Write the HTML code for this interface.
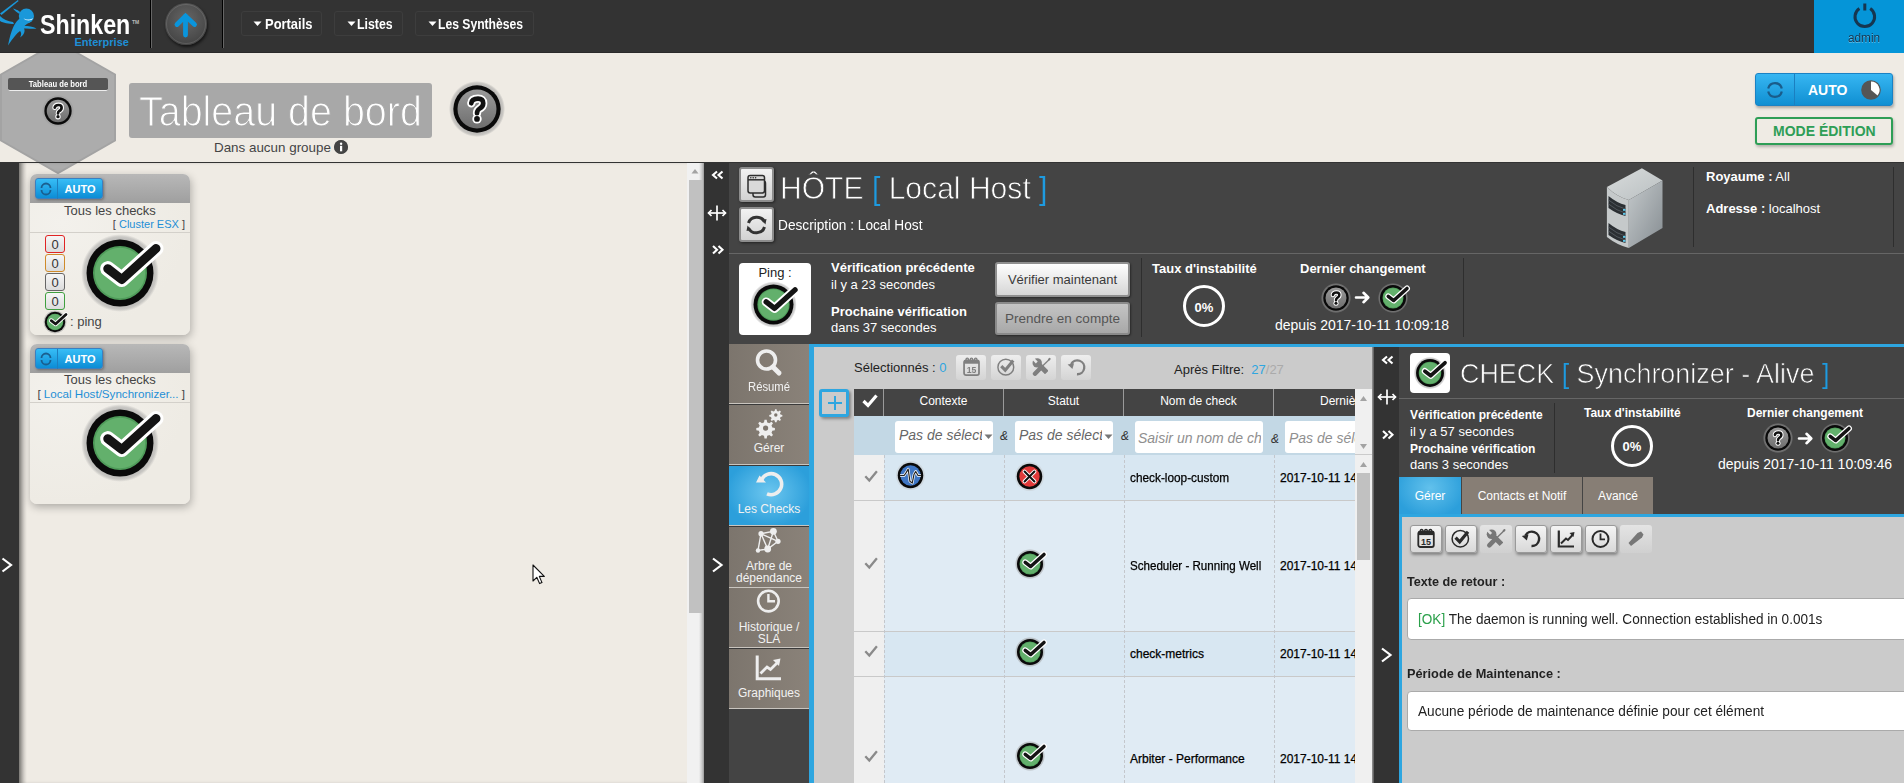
<!DOCTYPE html>
<html><head><meta charset="utf-8">
<style>
*{box-sizing:border-box;}
html,body{margin:0;padding:0;}
body{width:1904px;height:783px;overflow:hidden;position:relative;background:#efebe4;font-family:"Liberation Sans",sans-serif;color:#333;}
.a{position:absolute;}
.t{position:absolute;white-space:nowrap;line-height:1;}
svg.i{position:absolute;overflow:visible;}
.wl{color:#fff;}
.b{font-weight:bold;}
</style></head><body>
<svg width="0" height="0" style="position:absolute">
<defs>
<radialGradient id="halo" cx="50%" cy="50%" r="50%"><stop offset="0.85" stop-color="#9a9a9a" stop-opacity="0.6"/><stop offset="0.93" stop-color="#9a9a9a" stop-opacity="0.45"/><stop offset="1" stop-color="#9a9a9a" stop-opacity="0"/></radialGradient>
<linearGradient id="gq" x1="0" y1="0" x2="0" y2="1"><stop offset="0" stop-color="#9a9a9a"/><stop offset="1" stop-color="#6e6e6e"/></linearGradient>
<symbol id="ok" viewBox="-50 -50 100 100" style="overflow:visible">
<circle r="54" fill="url(#halo)"/>
<circle r="46.5" fill="#0a0a0a"/>
<circle r="37.5" fill="#4f9c5a"/>
<circle r="35" fill="#63b06c"/>
<path d="M-17 -6 L2.5 9 L50 -34" fill="none" stroke="#fff" stroke-width="21" stroke-linecap="round" stroke-linejoin="round"/>
<path d="M-17 -6 L2.5 9 L50 -34" fill="none" stroke="#141414" stroke-width="12.5" stroke-linecap="round" stroke-linejoin="round"/>
</symbol>
<symbol id="q" viewBox="-50 -50 100 100" style="overflow:visible">
<circle r="54" fill="url(#halo)"/>
<circle r="45.5" fill="#0a0a0a"/>
<circle r="37.5" fill="url(#gq)"/>
<path d="M-11 -11 Q-10 -20 2 -20 Q12 -20 12 -11 Q12 -4 4 0 Q0 3 0 8" fill="none" stroke="#fff" stroke-width="16" stroke-linecap="round" stroke-linejoin="round"/>
<circle cx="0" cy="19" r="9" fill="#fff"/>
<path d="M-11 -11 Q-10 -20 2 -20 Q12 -20 12 -11 Q12 -4 4 0 Q0 3 0 8" fill="none" stroke="#111" stroke-width="9" stroke-linecap="round" stroke-linejoin="round"/>
<circle cx="0" cy="19" r="5.5" fill="#111"/>
</symbol>
<symbol id="ic-cal" viewBox="0 0 31 27">
 <rect x="8.3" y="6.5" width="15.5" height="15.5" rx="2" fill="none" stroke="currentColor" stroke-width="1.8"/>
 <rect x="8.3" y="6.5" width="15.5" height="3.6" fill="currentColor"/>
 <g fill="none" stroke="currentColor" stroke-width="1.3"><circle cx="11.6" cy="5.6" r="1.3"/><circle cx="16" cy="5.6" r="1.3"/><circle cx="20.4" cy="5.6" r="1.3"/></g>
 <text x="16" y="19.8" text-anchor="middle" font-family="Liberation Sans" font-weight="bold" font-size="9" fill="currentColor">15</text>
</symbol>
<symbol id="ic-chk" viewBox="0 0 31 27">
 <circle cx="15.3" cy="13.7" r="8.2" fill="none" stroke="currentColor" stroke-width="1.5"/>
 <path d="M10.6 12.6 L14.7 16.8 L23 6.8" fill="none" stroke="currentColor" stroke-width="3.2" stroke-linejoin="miter"/>
</symbol>
<symbol id="ic-tools" viewBox="0 0 30 26">
 <mask id="wmask"><rect x="0" y="0" width="30" height="26" fill="#fff"/><path d="M6.5 4.2 L10.8 8.5" stroke="#000" stroke-width="2.6"/></mask>
 <g mask="url(#wmask)">
  <circle cx="11.2" cy="8.9" r="4.7" fill="currentColor"/>
  <path d="M11.8 9.6 L20.8 18.6" stroke="currentColor" stroke-width="5"/>
 </g>
 <path d="M23 5.7 L14.5 14" stroke="currentColor" stroke-width="1.3"/>
 <ellipse cx="23.3" cy="5.3" rx="1.1" ry="1.6" transform="rotate(45 23.3 5.3)" fill="currentColor"/>
 <path d="M15.3 13.2 L9 19.7" stroke="currentColor" stroke-width="4.4" stroke-linecap="round"/>
</symbol>
<symbol id="ic-undo" viewBox="0 0 31 27">
 <path d="M10.5 10.5 A7.2 7.2 0 1 1 16.5 21" fill="none" stroke="currentColor" stroke-width="2.4"/>
 <path d="M6.8 11 L11.8 15.5 L13.5 9.5 Z" fill="currentColor"/>
</symbol>
<symbol id="ic-chart" viewBox="0 0 31 27">
 <path d="M8.8 5.5 L8.8 21.5 L24 21.5" fill="none" stroke="currentColor" stroke-width="2.2"/>
 <path d="M11 18.5 L16 13.5 L18 15 L22.5 10" fill="none" stroke="currentColor" stroke-width="2"/>
 <path d="M19.5 8 L24.5 7 L23.5 12 Z" fill="currentColor"/>
</symbol>
<symbol id="ic-clock" viewBox="0 0 31 27">
 <circle cx="15.5" cy="14" r="8" fill="none" stroke="currentColor" stroke-width="2"/>
 <path d="M15.5 8.5 L15.5 14.3 L20 14.3" fill="none" stroke="currentColor" stroke-width="1.8"/>
</symbol>
<symbol id="ic-tag" viewBox="0 0 31 27">
 <path d="M11 21 L8.5 18 L17.5 8 L21 6.5 L23.5 9.5 L22 12.5 Z" fill="currentColor"/>
</symbol>
</defs>
</svg>

<!-- HEADER (beige) -->
<div id="hdr" class="a" style="left:0;top:0;width:1904px;height:163px;">
<svg class="i" style="left:0;top:41px" width="116" height="133" viewBox="0 0 116 133"><polygon points="58,1 115,33.5 115,99.5 58,132 1,99.5 1,33.5" fill="#acacac" stroke="#a3a3a3" stroke-width="2"/></svg>
<div class="a" style="left:8px;top:78px;width:100px;height:13px;background:#555;border-bottom:1px solid #eee;border-radius:2px;"></div>
<div class="t" style="left:8px;top:80px;width:100px;text-align:center;font-size:9px;font-weight:bold;color:#fff;transform:scaleX(0.85);transform-origin:50% 0;">Tableau de bord</div>
<svg class="i" style="left:43px;top:96px" width="30" height="30"><use href="#q"/></svg>
<div class="a" style="left:129px;top:83px;width:303px;height:55px;background:#a8a8a8;border-radius:3px;"></div>
<div id="ttl" class="t" style="left:139px;top:90px;font-size:43px;color:#fff;transform:scaleX(0.917);transform-origin:0 0;-webkit-text-stroke:1.1px #a8a8a8;">Tableau de bord</div>
<svg class="i" style="left:451px;top:83px" width="52" height="52"><use href="#q"/></svg>
<div id="dag" class="t" style="left:214px;top:140.5px;font-size:13.4px;color:#444;">Dans aucun groupe</div>
<div class="a" style="left:334px;top:140px;width:14px;height:14px;border-radius:50%;background:#444;"></div>
<div class="a" style="left:1755px;top:73px;width:138px;height:33px;border-radius:3px;background:linear-gradient(#37b6f2,#0f8fd2);border:1px solid #1a82c4;box-shadow:1px 2px 3px rgba(0,0,0,0.3);"></div>
<div class="t" style="left:1808px;top:83px;font-size:14px;font-weight:bold;color:#fff;">AUTO</div>
<div class="a" style="left:1755px;top:117px;width:138px;height:28px;border-radius:3px;border:2px solid #2e9e56;box-shadow:1px 2px 3px rgba(0,0,0,0.25);"></div>
<div class="t" style="left:1773px;top:124px;font-size:14px;font-weight:bold;color:#2e9e56;">MODE ÉDITION</div>
<div class="a" style="left:0;top:162px;width:1904px;height:1px;background:#333;"></div>
</div>

<!-- TOP BAR -->
<div id="top" class="a" style="left:0;top:0;width:1904px;height:53px;background:#333;border-bottom:1px solid #2a2a2a;">
<div class="t" style="left:40px;top:11.3px;font-size:28px;font-weight:bold;color:#fff;letter-spacing:0;transform:scaleX(0.829);transform-origin:0 0;">Shinken</div>
<div class="t" style="left:74.5px;top:37.4px;font-size:11px;color:#1e8fd6;font-weight:bold;">Enterprise</div>
<div class="a" style="left:150px;top:0;width:1px;height:48px;background:#000;"></div>
<div class="a" style="left:151px;top:0;width:1px;height:48px;background:#666;"></div>
<div class="a" style="left:165px;top:2.5px;width:42px;height:42px;border-radius:50%;background:radial-gradient(circle at 50% 40%,#666,#3a3a3a);box-shadow:1px 2px 3px rgba(0,0,0,0.6);"></div>
<div class="a" style="left:222px;top:0;width:1px;height:48px;background:#000;"></div>
<div class="a" style="left:223px;top:0;width:1px;height:48px;background:#666;"></div>
<div class="a" style="left:241px;top:11px;width:81px;height:25px;border:1px solid #3d3d3d;border-radius:3px;"></div>
<div class="t" style="left:264.5px;top:17px;font-size:14px;font-weight:bold;color:#fff;transform:scaleX(0.924);transform-origin:0 0;">Portails</div>
<div class="a" style="left:334px;top:11px;width:69px;height:25px;border:1px solid #3d3d3d;border-radius:3px;"></div>
<div class="t" style="left:357px;top:17px;font-size:14px;font-weight:bold;color:#fff;transform:scaleX(0.88);transform-origin:0 0;">Listes</div>
<div class="a" style="left:415px;top:11px;width:119px;height:25px;border:1px solid #3d3d3d;border-radius:3px;"></div>
<div class="t" style="left:438px;top:17px;font-size:14px;font-weight:bold;color:#fff;transform:scaleX(0.867);transform-origin:0 0;">Les Synthèses</div>
<div class="a" style="left:1814px;top:0;width:90px;height:53px;background:#0595d8;"></div>
<div class="t" style="left:1848px;top:31.5px;font-size:12px;color:#173752;text-shadow:0 1px 0 rgba(255,255,255,0.35);transform:scaleX(0.98);transform-origin:0 0;">admin</div>
</div>

<!-- LEFT -->
<div class="a" style="left:0;top:163px;width:19px;height:620px;background:#333;"></div>
<div class="a" style="left:19px;top:163px;width:668px;height:620px;box-shadow:inset 4px 0 4px -2px rgba(0,0,0,0.35);"></div>
<div class="a" style="left:687px;top:163px;width:17px;height:620px;background:linear-gradient(90deg,#f1f1f1 0,#f1f1f1 12px,#c9c9c9 15px,#9a9a9a 17px);"></div>
<div class="a" style="left:689px;top:180px;width:13px;height:433px;background:#c1c1c1;"></div>
<div class="a" style="left:704px;top:163px;width:25px;height:620px;background:#333;"></div>


<!-- WIDGETS -->
<div class="a" style="left:30px;top:174px;width:160px;height:161px;border-radius:7px;background:radial-gradient(ellipse at 20% 30%,#f3f1ec,#eeebe4 70%);box-shadow:1px 3px 8px rgba(0,0,0,0.28);overflow:hidden;">
 <div class="a" style="left:0;top:0;width:160px;height:29px;background:linear-gradient(#b8b8b8,#9f9f9f);"></div>
 <div class="a" style="left:0;top:58px;width:160px;height:1px;background:#d3d0ca;"></div>
</div>
<div class="a" style="left:35px;top:178px;width:68px;height:21px;border-radius:3px;background:linear-gradient(#37bdf6,#0c8dd5);border:1px solid #3b7fc0;box-shadow:1px 1px 3px rgba(0,0,0,0.35);"></div>
<div class="a" style="left:57px;top:179px;width:1px;height:20px;background:#1f7fbf;"></div>
<div class="t" style="left:64.5px;top:184px;font-size:11px;font-weight:bold;color:#fff;">AUTO</div>
<svg class="i" style="left:40px;top:183px" width="12" height="12" viewBox="0 0 12 12"><g fill="none" stroke="#1a5f8f" stroke-width="1.8"><path d="M1.5 5 A4.5 4.5 0 0 1 10.5 5"/><path d="M10.5 7 A4.5 4.5 0 0 1 1.5 7"/></g></svg>
<div class="t" style="left:30px;top:203.5px;width:160px;text-align:center;font-size:13px;color:#444;">Tous les checks</div>
<div class="t" style="left:30px;top:218.5px;width:155px;text-align:right;font-size:11px;color:#444;">[ <span style="color:#1e8fd6">Cluster ESX</span> ]</div>
<div class="a" style="left:45px;top:235px;width:20px;height:18px;border-radius:3px;border:1.5px solid #e02424;background:linear-gradient(#f6f6f6,#dcdcdc);"></div>
<div class="a" style="left:45px;top:254px;width:20px;height:18px;border-radius:3px;border:1.5px solid #cf8a2a;background:linear-gradient(#f6f6f6,#dcdcdc);"></div>
<div class="a" style="left:45px;top:273px;width:20px;height:18px;border-radius:3px;border:1.5px solid #666;background:linear-gradient(#f6f6f6,#dcdcdc);"></div>
<div class="a" style="left:45px;top:292px;width:20px;height:18px;border-radius:3px;border:1.5px solid #3f9f3f;background:linear-gradient(#f6f6f6,#dcdcdc);"></div>
<div class="t" style="left:45px;top:238px;width:20px;text-align:center;font-size:13px;color:#333;">0</div>
<div class="t" style="left:45px;top:257px;width:20px;text-align:center;font-size:13px;color:#333;">0</div>
<div class="t" style="left:45px;top:276px;width:20px;text-align:center;font-size:13px;color:#333;">0</div>
<div class="t" style="left:45px;top:295px;width:20px;text-align:center;font-size:13px;color:#333;">0</div>
<svg class="i" style="left:84px;top:237px" width="72" height="72"><use href="#ok"/></svg>
<svg class="i" style="left:44px;top:311px" width="22" height="22"><use href="#ok"/></svg>
<div class="t" style="left:70px;top:314.5px;font-size:13px;color:#444;">: ping</div>

<div class="a" style="left:30px;top:344px;width:160px;height:160px;border-radius:7px;background:radial-gradient(ellipse at 20% 30%,#f3f1ec,#eeebe4 70%);box-shadow:1px 3px 8px rgba(0,0,0,0.28);overflow:hidden;">
 <div class="a" style="left:0;top:0;width:160px;height:29px;background:linear-gradient(#b8b8b8,#9f9f9f);"></div>
 <div class="a" style="left:0;top:58px;width:160px;height:1px;background:#d3d0ca;"></div>
</div>
<div class="a" style="left:35px;top:348px;width:68px;height:21px;border-radius:3px;background:linear-gradient(#37bdf6,#0c8dd5);border:1px solid #3b7fc0;box-shadow:1px 1px 3px rgba(0,0,0,0.35);"></div>
<div class="a" style="left:57px;top:349px;width:1px;height:20px;background:#1f7fbf;"></div>
<div class="t" style="left:64.5px;top:354px;font-size:11px;font-weight:bold;color:#fff;">AUTO</div>
<svg class="i" style="left:40px;top:353px" width="12" height="12" viewBox="0 0 12 12"><g fill="none" stroke="#1a5f8f" stroke-width="1.8"><path d="M1.5 5 A4.5 4.5 0 0 1 10.5 5"/><path d="M10.5 7 A4.5 4.5 0 0 1 1.5 7"/></g></svg>
<div class="t" style="left:30px;top:373px;width:160px;text-align:center;font-size:13px;color:#444;">Tous les checks</div>
<div class="t" style="left:30px;top:388px;width:155px;text-align:right;font-size:11.6px;color:#444;">[ <span style="color:#1e8fd6">Local Host/Synchronizer...</span> ]</div>
<svg class="i" style="left:84px;top:407px" width="72" height="72"><use href="#ok"/></svg>

<!-- HOST PANEL -->
<div id="host" class="a" style="left:729px;top:163px;width:1175px;height:620px;background:#444;"></div>

<!-- dark strip icons -->

<!-- host header -->
<div class="a" style="left:739px;top:167px;width:35px;height:35px;border-radius:3px;border:2px solid #8d8d8d;background:linear-gradient(#f2f2f2,#d2d2d2);box-shadow:1px 1px 3px rgba(0,0,0,0.5);"></div>
<div class="a" style="left:739px;top:207px;width:35px;height:35px;border-radius:3px;border:2px solid #8d8d8d;background:linear-gradient(#f2f2f2,#d2d2d2);box-shadow:1px 1px 3px rgba(0,0,0,0.5);"></div>
<div id="hote" class="t" style="left:780px;top:172px;font-size:32px;color:#fff;transform:scaleX(0.94);transform-origin:0 0;-webkit-text-stroke:0.8px #444;">HÔTE <span style="color:#1e9be0;-webkit-text-stroke:0.2px #444">[</span> Local Host <span style="color:#1e9be0;-webkit-text-stroke:0.2px #444">]</span></div>
<div id="desc" class="t" style="left:778px;top:218px;font-size:14px;color:#fff;transform:scaleX(0.977);transform-origin:0 0;">Description : Local Host</div>
<div class="a" style="left:1693px;top:167px;width:1px;height:80px;background:#2e2e2e;"></div>
<div class="a" style="left:1893px;top:167px;width:1px;height:80px;background:#2e2e2e;"></div>
<div class="t" style="left:1706px;top:170px;font-size:13px;color:#fff;"><b>Royaume :</b> All</div>
<div class="t" style="left:1706px;top:202px;font-size:13px;color:#fff;"><b>Adresse :</b> localhost</div>
<div class="a" style="left:729px;top:253px;width:1175px;height:1px;background:#666;"></div>

<!-- ping section -->
<div class="a" style="left:739px;top:263px;width:72px;height:72px;border-radius:4px;background:#fff;"></div>
<div class="t" style="left:739px;top:266px;width:72px;text-align:center;font-size:13px;color:#222;">Ping :</div>
<svg class="i" style="left:752px;top:283px" width="43" height="43"><use href="#ok"/></svg>
<div class="t b" style="left:831px;top:261px;font-size:13px;color:#fff;">Vérification précédente</div>
<div class="t" style="left:831px;top:278px;font-size:13px;color:#fff;">il y a 23 secondes</div>
<div class="t b" style="left:831px;top:305px;font-size:13px;color:#fff;">Prochaine vérification</div>
<div class="t" style="left:831px;top:321px;font-size:13px;color:#fff;">dans 37 secondes</div>
<div class="a" style="left:995px;top:262px;width:135px;height:35px;border-radius:3px;border:2px solid #8f8f8f;background:linear-gradient(#fefefe,#d6d6d6);box-shadow:1px 1px 2px rgba(0,0,0,0.4);"></div>
<div class="t" style="left:995px;top:272.5px;width:135px;text-align:center;font-size:13px;color:#3a3a3a;">Vérifier maintenant</div>
<div class="a" style="left:995px;top:302px;width:135px;height:33px;border-radius:3px;border:2px solid #8a8a8a;background:linear-gradient(#c4c4c4,#a8a8a8);box-shadow:1px 1px 2px rgba(0,0,0,0.4);"></div>
<div class="t" style="left:995px;top:311.5px;width:135px;text-align:center;font-size:13.5px;color:#555;">Prendre en compte</div>
<div class="a" style="left:1141px;top:258px;width:1px;height:79px;background:#2e2e2e;"></div>
<div class="t b" style="left:1152px;top:261.5px;font-size:13px;color:#fff;">Taux d'instabilité</div>
<div class="a" style="left:1183px;top:285px;width:42px;height:42px;border-radius:50%;border:3px solid #fff;"></div>
<div class="t b" style="left:1183px;top:301px;width:42px;text-align:center;font-size:13px;color:#fff;">0%</div>
<div class="t b" style="left:1300px;top:261.5px;font-size:13px;color:#fff;">Dernier changement</div>
<svg class="i" style="left:1322px;top:284px" width="28" height="28"><use href="#q"/></svg>
<svg class="i" style="left:1355px;top:291px" width="16" height="13" viewBox="0 0 16 13"><path d="M1 6.5 L13 6.5 M8.5 1.8 L13.3 6.5 L8.5 11.2" fill="none" stroke="#fff" stroke-width="2.6" stroke-linecap="round" stroke-linejoin="round"/></svg>
<svg class="i" style="left:1379px;top:284px" width="28" height="28"><use href="#ok"/></svg>
<div class="t" style="left:1275px;top:317.5px;font-size:14px;color:#fff;">depuis 2017-10-11 10:09:18</div>
<div class="a" style="left:1463px;top:258px;width:1px;height:79px;background:#2e2e2e;"></div>

<!-- blue top -->
<div class="a" style="left:809px;top:344px;width:1095px;height:3px;background:#2ea6e0;"></div>
<div class="a" style="left:809px;top:344px;width:5px;height:439px;background:#2ea6e0;"></div>
<div class="a" style="left:814px;top:347px;width:559px;height:436px;background:#cbcbcb;"></div>
<div class="a" style="left:1373px;top:347px;width:26px;height:436px;background:#333;"></div>
<div class="a" style="left:1399px;top:347px;width:505px;height:436px;background:#444;"></div>


<!-- side menu -->
<div class="a" style="left:729px;top:344px;width:80px;height:59px;background:linear-gradient(90deg,#7c756d,#8a8279);"></div>
<div class="a" style="left:729px;top:403px;width:80px;height:1px;background:#c9c5bf;"></div>
<div class="a" style="left:729px;top:404px;width:80px;height:1px;background:#3a3a3a;"></div>
<div class="a" style="left:729px;top:405px;width:80px;height:59px;background:linear-gradient(90deg,#7c756d,#8a8279);"></div>
<div class="a" style="left:729px;top:464px;width:80px;height:1px;background:#c9c5bf;"></div>
<div class="a" style="left:729px;top:465px;width:80px;height:1px;background:#3a3a3a;"></div>
<div class="a" style="left:729px;top:466px;width:80px;height:59px;background:radial-gradient(ellipse at 50% 45%,#6cc6ef,#2c9fdb 75%);"></div>
<div class="a" style="left:729px;top:525px;width:80px;height:1px;background:#c9c5bf;"></div>
<div class="a" style="left:729px;top:526px;width:80px;height:1px;background:#3a3a3a;"></div>
<div class="a" style="left:729px;top:527px;width:80px;height:60px;background:linear-gradient(90deg,#7c756d,#8a8279);"></div>
<div class="a" style="left:729px;top:587px;width:80px;height:1px;background:#c9c5bf;"></div>
<div class="a" style="left:729px;top:588px;width:80px;height:60px;background:linear-gradient(90deg,#7c756d,#8a8279);"></div>
<div class="a" style="left:729px;top:647px;width:80px;height:1px;background:#c9c5bf;"></div>
<div class="a" style="left:729px;top:648px;width:80px;height:1px;background:#3a3a3a;"></div>
<div class="a" style="left:729px;top:649px;width:80px;height:59px;background:linear-gradient(90deg,#7c756d,#8a8279);"></div>
<div class="a" style="left:729px;top:708px;width:80px;height:1px;background:#c9c5bf;"></div>
<div class="a" style="left:729px;top:709px;width:80px;height:74px;background:#444;"></div>

<svg class="i" style="left:729px;top:344px" width="80" height="365" viewBox="0 0 80 365">
 <g fill="none" stroke="#eee" stroke-width="3.6" stroke-linecap="round">
  <circle cx="37.5" cy="16" r="9"/><line x1="44" y1="23" x2="50" y2="29" stroke-width="5"/>
 </g>
</svg>
<div class="t" style="left:729px;top:381px;width:80px;text-align:center;font-size:12px;color:#f2f2f2;transform:scaleX(0.94);transform-origin:50% 0;">Résumé</div>
<div class="t" style="left:729px;top:442px;width:80px;text-align:center;font-size:12px;color:#f2f2f2;">Gérer</div>
<div class="t" style="left:729px;top:503px;width:80px;text-align:center;font-size:12px;color:#f2f2f2;">Les Checks</div>
<div class="t" style="left:729px;top:559.5px;width:80px;text-align:center;font-size:12px;color:#f2f2f2;line-height:12px;">Arbre de<br>dépendance</div>
<div class="t" style="left:729px;top:620.5px;width:80px;text-align:center;font-size:12px;color:#f2f2f2;line-height:12px;">Historique /<br>SLA</div>
<div class="t" style="left:729px;top:686.5px;width:80px;text-align:center;font-size:12px;color:#f2f2f2;">Graphiques</div>

<!-- checks toolbar -->
<div id="sel" class="t" style="left:854px;top:361px;font-size:13px;color:#222;">Sélectionnés : <span style="color:#2ea6e0">0</span></div>
<div class="a" style="left:956px;top:355px;width:30px;height:25px;border-radius:3px;background:linear-gradient(#eee,#d4d4d4);"></div>
<div class="a" style="left:991px;top:355px;width:30px;height:25px;border-radius:3px;background:linear-gradient(#eee,#d4d4d4);"></div>
<div class="a" style="left:1026px;top:355px;width:30px;height:25px;border-radius:3px;background:linear-gradient(#eee,#d4d4d4);"></div>
<div class="a" style="left:1061px;top:355px;width:30px;height:25px;border-radius:3px;background:linear-gradient(#eee,#d4d4d4);"></div>
<div id="apf" class="t" style="left:1174px;top:363px;font-size:13px;color:#222;">Après Filtre:&nbsp; <span style="color:#2ea6e0">27</span><span style="color:#aaa">/27</span></div>

<!-- plus -->
<div class="a" style="left:819px;top:389px;width:30px;height:28px;border-radius:3px;border:3px solid #2ea6e0;background:#cbcbcb;box-shadow:2px 2px 3px rgba(0,0,0,0.35);"></div>
<div class="a" style="left:828px;top:401.8px;width:14px;height:2.4px;background:#2ea6e0;"></div>
<div class="a" style="left:833.8px;top:396px;width:2.4px;height:14px;background:#2ea6e0;"></div>

<!-- table -->
<div class="a" style="left:854px;top:389px;width:501px;height:27px;background:#444;"></div>
<div class="a" style="left:883px;top:389px;width:1px;height:27px;background:#9a9a9a;"></div>
<div class="a" style="left:1003px;top:389px;width:1px;height:27px;background:#9a9a9a;"></div>
<div class="a" style="left:1123px;top:389px;width:1px;height:27px;background:#9a9a9a;"></div>
<div class="a" style="left:1273px;top:389px;width:1px;height:27px;background:#9a9a9a;"></div>
<div class="t" style="left:884px;top:394.5px;width:119px;text-align:center;font-size:12px;color:#fff;">Contexte</div>
<div class="t" style="left:1004px;top:394.5px;width:119px;text-align:center;font-size:12px;color:#fff;">Statut</div>
<div class="t" style="left:1124px;top:394.5px;width:149px;text-align:center;font-size:12px;color:#fff;">Nom de check</div>
<div class="t" style="left:1320px;top:394.5px;font-size:12px;color:#fff;width:35px;overflow:hidden;">Derniè</div>
<div class="a" style="left:854px;top:416px;width:501px;height:39px;background:#c3d8e5;"></div>
<div class="a" style="left:895px;top:421px;width:98px;height:32px;border-radius:3px;background:#fff;"></div>
<div class="t" style="left:899px;top:428px;font-size:14px;font-style:italic;color:#666;width:83px;overflow:hidden;">Pas de sélecti</div>
<div class="a" style="left:1015px;top:421px;width:98px;height:32px;border-radius:3px;background:#fff;"></div>
<div class="t" style="left:1019px;top:428px;font-size:14px;font-style:italic;color:#666;width:83px;overflow:hidden;">Pas de sélecti</div>
<div class="a" style="left:1135px;top:421px;width:128px;height:32px;border-radius:3px;background:#fff;"></div>
<div class="t" style="left:1138px;top:431px;font-size:14px;font-style:italic;color:#8f8f8f;width:123px;overflow:hidden;">Saisir un nom de che</div>
<div class="a" style="left:1285px;top:421px;width:70px;height:32px;border-radius:3px 0 0 3px;background:#fff;"></div>
<div class="t" style="left:1289px;top:431px;font-size:14px;font-style:italic;color:#8f8f8f;width:66px;overflow:hidden;">Pas de séle</div>
<div class="t" style="left:1000px;top:430px;font-size:12px;font-style:italic;color:#333;">&amp;</div>
<div class="t" style="left:1121px;top:430px;font-size:12px;font-style:italic;color:#333;">&amp;</div>
<div class="t" style="left:1271px;top:433px;font-size:12px;font-style:italic;color:#333;">&amp;</div>


<!-- rows -->
<div class="a" style="left:854px;top:455px;width:501px;height:45px;background:#d8e7f2;"></div>
<div class="a" style="left:854px;top:500px;width:501px;height:1px;background:#c9c9c9;"></div>
<div class="a" style="left:854px;top:501px;width:501px;height:130px;background:#e0ebf4;"></div>
<div class="a" style="left:854px;top:631px;width:501px;height:1px;background:#c9c9c9;"></div>
<div class="a" style="left:854px;top:632px;width:501px;height:44px;background:#d8e7f2;"></div>
<div class="a" style="left:854px;top:676px;width:501px;height:1px;background:#c9c9c9;"></div>
<div class="a" style="left:854px;top:677px;width:501px;height:106px;background:#e0ebf4;"></div>
<div class="a" style="left:854px;top:455px;width:30px;height:45px;background:#efefef;"></div>
<div class="a" style="left:854px;top:501px;width:30px;height:130px;background:#efefef;"></div>
<div class="a" style="left:854px;top:632px;width:30px;height:44px;background:#efefef;"></div>
<div class="a" style="left:854px;top:677px;width:30px;height:106px;background:#efefef;"></div>
<div class="a" style="left:884px;top:455px;width:0;height:328px;border-left:1px dashed #c4c7cc;"></div>
<div class="a" style="left:1004px;top:455px;width:0;height:328px;border-left:1px dashed #c4c7cc;"></div>
<div class="a" style="left:1124px;top:455px;width:0;height:328px;border-left:1px dashed #c4c7cc;"></div>
<div class="a" style="left:1274px;top:455px;width:0;height:328px;border-left:1px dashed #c4c7cc;"></div>
<div class="t" style="left:1130px;top:471.5px;font-size:12px;color:#000;-webkit-text-stroke:0.25px #000;transform:scaleX(0.985);transform-origin:0 0;">check-loop-custom</div>
<div class="t" style="left:1280px;top:471.5px;font-size:12px;color:#000;-webkit-text-stroke:0.25px #000;width:75px;overflow:hidden;">2017-10-11 14:</div>
<div class="t" style="left:1130px;top:560px;font-size:12px;color:#000;-webkit-text-stroke:0.25px #000;transform:scaleX(0.966);transform-origin:0 0;">Scheduler - Running Well</div>
<div class="t" style="left:1280px;top:560px;font-size:12px;color:#000;-webkit-text-stroke:0.25px #000;width:75px;overflow:hidden;">2017-10-11 14:</div>
<div class="t" style="left:1130px;top:648px;font-size:12px;color:#000;-webkit-text-stroke:0.25px #000;">check-metrics</div>
<div class="t" style="left:1280px;top:648px;font-size:12px;color:#000;-webkit-text-stroke:0.25px #000;width:75px;overflow:hidden;">2017-10-11 14:</div>
<div class="t" style="left:1130px;top:753px;font-size:12px;color:#000;-webkit-text-stroke:0.25px #000;">Arbiter - Performance</div>
<div class="t" style="left:1280px;top:753px;font-size:12px;color:#000;-webkit-text-stroke:0.25px #000;width:75px;overflow:hidden;">2017-10-11 14:</div>
<svg class="i" style="left:1016px;top:550px" width="28" height="28"><use href="#ok"/></svg>
<svg class="i" style="left:1016px;top:638px" width="28" height="28"><use href="#ok"/></svg>
<svg class="i" style="left:1016px;top:742px" width="28" height="28"><use href="#ok"/></svg>
<svg class="i" style="left:1015px;top:462px" width="29" height="29" viewBox="-50 -50 100 100"><circle r="50" fill="#cfd9e0"/><circle r="44" fill="#0a0a0a"/><circle r="35" fill="#e03a3a"/><path d="M-17 -17 L17 17 M17 -17 L-17 17" stroke="#fff" stroke-width="14" stroke-linecap="round"/><path d="M-17 -17 L17 17 M17 -17 L-17 17" stroke="#111" stroke-width="7" stroke-linecap="round"/></svg>
<svg class="i" style="left:896px;top:461px" width="29" height="29" viewBox="-50 -50 100 100"><circle r="50" fill="#cfd9e0"/><circle r="44" fill="#0a0a0a"/><circle r="35" fill="#3f76c4"/><path d="M-36 0 L-22 0 L-15 -10 L-8 -22 L-2 20 L6 26 L12 -4 L18 -14 L26 0 L36 0" fill="none" stroke="#fff" stroke-width="9" stroke-linejoin="round"/><path d="M-36 0 L-22 0 L-15 -10 L-8 -22 L-2 20 L6 26 L12 -4 L18 -14 L26 0 L36 0" fill="none" stroke="#222" stroke-width="4" stroke-linejoin="round"/></svg>

<!-- inner scrollbars -->
<div class="a" style="left:1355px;top:389px;width:17px;height:65px;background:#f0f0f0;"></div>
<div class="a" style="left:1355px;top:455px;width:17px;height:328px;background:#f0f0f0;"></div>
<div class="a" style="left:1357px;top:473px;width:13px;height:87px;background:#c1c1c1;"></div>
<div class="a" style="left:1372px;top:347px;width:2px;height:436px;background:linear-gradient(90deg,#9a9a9a,#555);"></div>
<svg class="i" style="left:1355px;top:389px" width="17" height="90" viewBox="0 0 17 90"><g fill="#a3a3a3"><path d="M5 12 L12 12 L8.5 7 Z"/><path d="M5 55 L12 55 L8.5 60 Z"/><path d="M5 78 L12 78 L8.5 73 Z"/></g></svg>

<!-- CHECK PANEL -->
<div class="a" style="left:1410px;top:353px;width:40px;height:40px;border-radius:4px;background:#fff;"></div>
<svg class="i" style="left:1415px;top:358px" width="30" height="30"><use href="#ok"/></svg>
<div id="chk" class="t" style="left:1460px;top:360px;font-size:28px;color:#fff;transform:scaleX(0.961);transform-origin:0 0;-webkit-text-stroke:0.7px #444;">CHECK <span style="color:#1e9be0;-webkit-text-stroke:0.2px #444">[</span> Synchronizer - Alive <span style="color:#1e9be0;-webkit-text-stroke:0.2px #444">]</span></div>
<div class="a" style="left:1399px;top:398px;width:505px;height:1px;background:#666;"></div>
<div class="a" style="left:1554px;top:403px;width:1px;height:70px;background:#2e2e2e;"></div>
<div class="t b" style="left:1410px;top:409px;font-size:12px;color:#fff;">Vérification précédente</div>
<div class="t" style="left:1410px;top:424.5px;font-size:13px;color:#fff;">il y a 57 secondes</div>
<div class="t b" style="left:1410px;top:443px;font-size:12px;color:#fff;">Prochaine vérification</div>
<div class="t" style="left:1410px;top:458px;font-size:13px;color:#fff;">dans 3 secondes</div>
<div class="t b" style="left:1584px;top:407px;font-size:12px;color:#fff;">Taux d'instabilité</div>
<div class="a" style="left:1611px;top:425px;width:42px;height:42px;border-radius:50%;border:3px solid #fff;"></div>
<div class="t b" style="left:1611px;top:440px;width:42px;text-align:center;font-size:13px;color:#fff;">0%</div>
<div class="t b" style="left:1747px;top:407px;font-size:12px;color:#fff;">Dernier changement</div>
<svg class="i" style="left:1764px;top:424px" width="28" height="28"><use href="#q"/></svg>
<svg class="i" style="left:1798px;top:431.5px" width="16" height="13" viewBox="0 0 16 13"><path d="M1 6.5 L13 6.5 M8.5 1.8 L13.3 6.5 L8.5 11.2" fill="none" stroke="#fff" stroke-width="2.6" stroke-linecap="round" stroke-linejoin="round"/></svg>
<svg class="i" style="left:1821px;top:424px" width="28" height="28"><use href="#ok"/></svg>
<div class="t" style="left:1718px;top:457px;font-size:14px;color:#fff;">depuis 2017-10-11 10:09:46</div>

<!-- tabs -->
<div class="a" style="left:1399px;top:477px;width:62px;height:37px;background:radial-gradient(ellipse at 50% 30%,#62c1ec,#2c9fdb 80%);"></div>
<div class="a" style="left:1462px;top:477px;width:120px;height:37px;background:#877e75;"></div>
<div class="a" style="left:1583px;top:477px;width:70px;height:37px;background:#877e75;"></div>
<div class="t" style="left:1399px;top:489.5px;width:62px;text-align:center;font-size:12px;color:#fff;">Gérer</div>
<div class="t" style="left:1462px;top:489.5px;width:120px;text-align:center;font-size:12px;color:#fff;">Contacts et Notif</div>
<div class="t" style="left:1583px;top:489.5px;width:70px;text-align:center;font-size:12px;color:#fff;">Avancé</div>
<div class="a" style="left:1399px;top:514px;width:505px;height:3px;background:#2ea6e0;"></div>
<div class="a" style="left:1399px;top:514px;width:3px;height:269px;background:#2ea6e0;"></div>
<div class="a" style="left:1402px;top:517px;width:502px;height:266px;background:#cbcbcb;"></div>

<div class="a" style="left:1410px;top:525px;width:32px;height:28px;border-radius:3px;border:1px solid #999;background:linear-gradient(#f4f4f4,#d8d8d8);box-shadow:1px 2px 3px rgba(0,0,0,0.35);"></div>
<div class="a" style="left:1445px;top:525px;width:32px;height:28px;border-radius:3px;border:1px solid #999;background:linear-gradient(#f4f4f4,#d8d8d8);box-shadow:1px 2px 3px rgba(0,0,0,0.35);"></div>
<div class="a" style="left:1480px;top:525px;width:32px;height:28px;border-radius:3px;background:linear-gradient(#e4e4e4,#d0d0d0);"></div>
<div class="a" style="left:1515px;top:525px;width:32px;height:28px;border-radius:3px;border:1px solid #999;background:linear-gradient(#f4f4f4,#d8d8d8);box-shadow:1px 2px 3px rgba(0,0,0,0.35);"></div>
<div class="a" style="left:1550px;top:525px;width:32px;height:28px;border-radius:3px;border:1px solid #999;background:linear-gradient(#f4f4f4,#d8d8d8);box-shadow:1px 2px 3px rgba(0,0,0,0.35);"></div>
<div class="a" style="left:1585px;top:525px;width:32px;height:28px;border-radius:3px;border:1px solid #999;background:linear-gradient(#f4f4f4,#d8d8d8);box-shadow:1px 2px 3px rgba(0,0,0,0.35);"></div>
<div class="a" style="left:1620px;top:525px;width:32px;height:28px;border-radius:3px;background:linear-gradient(#e4e4e4,#d0d0d0);"></div>

<div class="t b" style="left:1407px;top:575px;font-size:13px;color:#222;transform:scaleX(0.973);transform-origin:0 0;">Texte de retour :</div>
<div class="a" style="left:1407px;top:598px;width:520px;height:42px;border-radius:4px;border:1px solid #aaa;background:#fff;"></div>
<div class="t" style="left:1418px;top:612px;font-size:14px;color:#222;transform:scaleX(0.97);transform-origin:0 0;"><span style="color:#2aa04a">[OK]</span> The daemon is running well. Connection established in 0.001s</div>
<div class="t b" style="left:1407px;top:666.5px;font-size:13px;color:#222;transform:scaleX(0.981);transform-origin:0 0;">Période de Maintenance :</div>
<div class="a" style="left:1407px;top:691px;width:520px;height:40px;border-radius:4px;border:1px solid #aaa;background:#fff;"></div>
<div class="t" style="left:1418px;top:704px;font-size:14px;color:#222;transform:scaleX(0.975);transform-origin:0 0;">Aucune période de maintenance définie pour cet élément</div>

<!-- dark strip 2 icons -->


<!-- ICONS -->
<!-- ninja logo -->
<svg class="i" style="left:0;top:0" width="40" height="50" viewBox="0 0 40 50">
 <g fill="#1a98da">
  <path d="M0 13.5 L17.8 0 L18.6 1 L1.5 15 Z"/>
  <path d="M0 16 C3 19 8 21.5 13 22 L14 24 C9 24 3 23 0 21 Z"/>
  <circle cx="26.4" cy="16" r="7.6"/>
  <path d="M20 12 C19 10.5 15 9 13 8.5 C14.5 10.5 17 12.5 19.5 14 Z"/>
  <path d="M20.5 18 C15 21 11 30 8 45.5 C13 38 17 33 20 31 C22 33 21 36 20 37.5 C24 35 25.5 31 24 28.5 C28 28 33 29.5 36.5 28.5 C33 26.5 28 26 24.5 26 C27 24 29 22.5 30 21 Z"/>
 </g>
 <path d="M23.5 18.2 C26 20 30 20 33 18.2 C32 20.8 26 21.5 23.5 18.2 Z" fill="#e8f6ff"/>
</svg>
<div class="t" style="left:132px;top:19.5px;font-size:5px;font-weight:bold;color:#bbb;">TM</div>
<!-- up arrow -->
<svg class="i" style="left:165px;top:3px" width="42" height="42" viewBox="0 0 42 42">
 <path d="M20.5 13 L20.5 32 M12 21.5 L20.5 13 L29.5 21.5" fill="none" stroke="#0a95dc" stroke-width="4.8" stroke-linecap="round" stroke-linejoin="miter"/>
</svg>
<div class="a" style="left:166px;top:4px;width:40px;height:40px;border-radius:50%;border:1px solid rgba(255,255,255,0.12);"></div>
<!-- nav carets -->
<svg class="i" style="left:253px;top:21px" width="9" height="6"><path d="M0.5 0.5 L8.5 0.5 L4.5 5 Z" fill="#fff"/></svg>
<svg class="i" style="left:347px;top:21px" width="9" height="6"><path d="M0.5 0.5 L8.5 0.5 L4.5 5 Z" fill="#fff"/></svg>
<svg class="i" style="left:428px;top:21px" width="9" height="6"><path d="M0.5 0.5 L8.5 0.5 L4.5 5 Z" fill="#fff"/></svg>
<!-- power -->
<svg class="i" style="left:1850px;top:2px" width="30" height="30" viewBox="0 0 30 30">
 <path d="M9.4 6.6 A9.8 9.8 0 1 0 20.2 6.6" fill="none" stroke="#163650" stroke-width="3"/>
 <line x1="14.8" y1="1.5" x2="14.8" y2="8.5" stroke="#163650" stroke-width="3"/>
</svg>
<!-- AUTO header icons -->
<div class="a" style="left:1794px;top:74px;width:1px;height:31px;background:#1b7fc0;"></div>
<svg class="i" style="left:1766px;top:81px" width="18" height="18" viewBox="0 0 18 18"><g fill="none" stroke="#1a5c8a" stroke-width="2.2"><path d="M2.2 7.5 A7 7 0 0 1 15.8 7.5"/><path d="M15.8 10.5 A7 7 0 0 1 2.2 10.5"/></g></svg>
<svg class="i" style="left:1861px;top:80px" width="20" height="20" viewBox="-10 -10 20 20"><circle r="9.8" fill="#555"/><path d="M0 0 L0 -8.5 A8.5 8.5 0 0 1 6.5 5.5 Z" fill="#fff"/></svg>
<!-- info -->
<svg class="i" style="left:334px;top:140px" width="14" height="14" viewBox="0 0 14 14"><circle cx="7" cy="7" r="6.8" fill="#444"/><rect x="6" y="5.8" width="2.2" height="5.5" fill="#fff"/><circle cx="7.1" cy="3.8" r="1.2" fill="#fff"/></svg>

<!-- window icon -->
<svg class="i" style="left:739px;top:167px" width="35" height="35" viewBox="0 0 35 35">
 <g fill="none" stroke="#2e2e2e" stroke-width="1.5">
  <rect x="14" y="14" width="12.5" height="16" rx="2.2"/>
  <rect x="9" y="8.5" width="16.5" height="17.5" rx="2.2" fill="#d9d9d9"/>
  <line x1="9" y1="12.8" x2="25.5" y2="12.8"/>
 </g>
 <g fill="#2e2e2e"><circle cx="11.8" cy="10.7" r="0.8"/><circle cx="14.2" cy="10.7" r="0.8"/><circle cx="16.6" cy="10.7" r="0.8"/></g>
</svg>
<!-- refresh icon -->
<svg class="i" style="left:739px;top:207px" width="35" height="35" viewBox="0 0 35 35">
 <g fill="none" stroke="#333" stroke-width="3">
  <path d="M9.5 16 A8.5 8 0 0 1 25.5 15"/>
  <path d="M25.5 20 A8.5 8 0 0 1 9.5 21"/>
 </g>
 <path d="M22.5 13 L27.5 12 L26.5 17.5 Z" fill="#333"/>
 <path d="M12.5 23 L7.5 24 L8.5 18.5 Z" fill="#333"/>
</svg>
<!-- server -->
<svg class="i" style="left:1600px;top:165px" width="70" height="90" viewBox="0 0 70 90">
 <defs>
  <linearGradient id="sv1" x1="0" y1="0" x2="1" y2="1"><stop offset="0" stop-color="#d9dcdc"/><stop offset="1" stop-color="#b9bfc1"/></linearGradient>
  <linearGradient id="sv2" x1="0" y1="0" x2="1" y2="1"><stop offset="0" stop-color="#c4c9cb"/><stop offset="1" stop-color="#868d92"/></linearGradient>
 </defs>
 <path d="M41.9 3.3 L62.5 15.4 L28.8 35 Q17 32 6.9 22 Z" fill="url(#sv1)"/>
 <path d="M6.9 22 Q17 32 28.8 35 L28.8 83 Q17 80 6.9 72 Z" fill="#c5c9ca"/>
 <path d="M28.8 35 L62.5 15.4 L62.5 63 L28.8 83 Z" fill="url(#sv2)"/>
 <path d="M8.5 31 Q17 38 25.5 40 L25.5 51 Q17 49 8.5 43 Z" fill="#2b2f33"/>
 <path d="M8.5 35 Q17 42 25.5 44 M8.5 39 Q17 46 25.5 48" stroke="#50565b" stroke-width="1" fill="none"/>
 <path d="M8.5 58 Q17 65 25.5 67 L25.5 78 Q17 76 8.5 70 Z" fill="#2b2f33"/>
 <path d="M8.5 62 Q17 69 25.5 71 M8.5 66 Q17 73 25.5 75" stroke="#50565b" stroke-width="1" fill="none"/>
 <g fill="#5ec8e8"><rect x="23" y="44" width="2.5" height="1.8"/><rect x="23" y="48" width="2.5" height="1.8"/><rect x="23" y="71" width="2.5" height="1.8"/><rect x="23" y="75" width="2.5" height="1.8"/></g>
</svg>


<!-- chevrons & arrows -->
<svg class="i" style="left:700px;top:160px" width="30" height="100" viewBox="0 0 30 100" fill="none" stroke="#fff" stroke-width="2.1">
 <path d="M17 11.5 L13 15 L17 18.5 M22.5 11.5 L18.5 15 L22.5 18.5"/>
 <path d="M13 86 L17 89.7 L13 93.4 M18.5 86 L22.5 89.7 L18.5 93.4"/>
 <path d="M8.5 53 L25.5 53" stroke-width="1.7"/><path d="M17 45.5 L17 60.5" stroke-width="1.7"/>
 <path d="M11.5 50 L8.5 53 L11.5 56 M22.5 50 L25.5 53 L22.5 56" stroke-width="1.7"/>
</svg>
<svg class="i" style="left:1370px;top:345px" width="30" height="100" viewBox="0 0 30 100" fill="none" stroke="#fff" stroke-width="2.1">
 <path d="M17 11.5 L13 15 L17 18.5 M22.5 11.5 L18.5 15 L22.5 18.5"/>
 <path d="M13 86 L17 89.7 L13 93.4 M18.5 86 L22.5 89.7 L18.5 93.4"/>
 <path d="M8.5 52 L25.5 52" stroke-width="1.7"/><path d="M17 44.5 L17 59.5" stroke-width="1.7"/>
 <path d="M11.5 49 L8.5 52 L11.5 55 M22.5 49 L25.5 52 L22.5 55" stroke-width="1.7"/>
</svg>
<svg class="i" style="left:0;top:555px" width="20" height="20" fill="none" stroke="#fff" stroke-width="2.2"><path d="M2.5 3.5 L11 10 L2.5 16.5"/></svg>
<svg class="i" style="left:709px;top:555px" width="20" height="20" fill="none" stroke="#fff" stroke-width="2.2"><path d="M4 3.5 L12.5 10 L4 16.5"/></svg>
<svg class="i" style="left:1378px;top:645px" width="20" height="20" fill="none" stroke="#fff" stroke-width="2.2"><path d="M4 3.5 L12.5 10 L4 16.5"/></svg>
<div class="a" style="left:19px;top:163px;width:8px;height:620px;background:linear-gradient(90deg,rgba(0,0,0,0.28),rgba(0,0,0,0));"></div>
<!-- left scrollbar arrow -->
<svg class="i" style="left:687px;top:163px" width="16" height="17"><path d="M4.5 10.5 L11.5 10.5 L8 6 Z" fill="#a3a3a3"/></svg>
<!-- cursor -->
<svg class="i" style="left:532px;top:564px" width="14" height="22" viewBox="0 0 14 22"><path d="M1 1 L1 17 L4.8 13.3 L7.6 19.6 L10 18.6 L7.3 12.4 L12.3 12.4 Z" fill="#fff" stroke="#111" stroke-width="1.1" stroke-linejoin="round"/></svg>

<!-- side menu icons -->
<svg class="i" style="left:729px;top:405px" width="80" height="60" viewBox="0 0 80 60">
 <g fill="#eee">
  <path d="M35.5 14.8 l2.2 0 l0.5 2.6 a7 7 0 0 1 2 0.8 l2.2 -1.5 l1.6 1.6 l-1.5 2.2 a7 7 0 0 1 0.8 2 l2.6 0.5 l0 2.2 l-2.6 0.5 a7 7 0 0 1 -0.8 2 l1.5 2.2 l-1.6 1.6 l-2.2 -1.5 a7 7 0 0 1 -2 0.8 l-0.5 2.6 l-2.2 0 l-0.5 -2.6 a7 7 0 0 1 -2 -0.8 l-2.2 1.5 l-1.6 -1.6 l1.5 -2.2 a7 7 0 0 1 -0.8 -2 l-2.6 -0.5 l0 -2.2 l2.6 -0.5 a7 7 0 0 1 0.8 -2 l-1.5 -2.2 l1.6 -1.6 l2.2 1.5 a7 7 0 0 1 2 -0.8 z"/>
  <path d="M46 4.2 l1.6 0 l0.35 1.8 a4.8 4.8 0 0 1 1.4 0.6 l1.5 -1 l1.1 1.1 l-1 1.5 a4.8 4.8 0 0 1 0.6 1.4 l1.8 0.35 l0 1.6 l-1.8 0.35 a4.8 4.8 0 0 1 -0.6 1.4 l1 1.5 l-1.1 1.1 l-1.5 -1 a4.8 4.8 0 0 1 -1.4 0.6 l-0.35 1.8 l-1.6 0 l-0.35 -1.8 a4.8 4.8 0 0 1 -1.4 -0.6 l-1.5 1 l-1.1 -1.1 l1 -1.5 a4.8 4.8 0 0 1 -0.6 -1.4 l-1.8 -0.35 l0 -1.6 l1.8 -0.35 a4.8 4.8 0 0 1 0.6 -1.4 l-1 -1.5 l1.1 -1.1 l1.5 1 a4.8 4.8 0 0 1 1.4 -0.6 z"/>
 </g>
 <circle cx="36.6" cy="23.1" r="2.6" fill="#7d766e"/>
 <circle cx="46.8" cy="10" r="1.7" fill="#7d766e"/>
</svg>
<svg class="i" style="left:729px;top:466px" width="80" height="60" viewBox="0 0 80 60">
 <path d="M32.5 14 A10.5 10.5 0 1 1 38 27.8" fill="none" stroke="#eee" stroke-width="3.6"/>
 <path d="M27 16.5 L30.5 9.5 L37 16.5 Z" fill="#eee"/>
</svg>
<svg class="i" style="left:729px;top:527px" width="80" height="60" viewBox="0 0 80 60" >
 <g stroke="#eee" stroke-width="1.4" fill="none">
  <path d="M32 6.7 L44.4 4.3 L49 14.3 L38.7 22 L29 23.5 Z M32 6.7 L38.7 22 L44.4 4.3 M32 6.7 L49 14.3"/>
 </g>
 <g fill="#eee"><circle cx="32" cy="6.7" r="2.6"/><circle cx="44.4" cy="4.3" r="3.4"/><circle cx="49" cy="14.3" r="2.6"/><circle cx="38.7" cy="22" r="3.4"/><circle cx="29" cy="23.5" r="2.2"/></g>
</svg>
<svg class="i" style="left:729px;top:588px" width="80" height="60" viewBox="0 0 80 60">
 <circle cx="39.4" cy="13.1" r="10.3" fill="none" stroke="#eee" stroke-width="2.6"/>
 <path d="M39.4 6 L39.4 13.3 L46 13.3" fill="none" stroke="#eee" stroke-width="2.4"/>
</svg>
<svg class="i" style="left:729px;top:649px" width="80" height="60" viewBox="0 0 80 60">
 <path d="M28.2 6.5 L28.2 29.7 L52 29.7" fill="none" stroke="#eee" stroke-width="3"/>
 <path d="M31.5 24.5 L38 18 L41.5 20.5 L48 14" fill="none" stroke="#eee" stroke-width="2.8"/>
 <path d="M44 11 L51.5 9.5 L50 17 Z" fill="#eee"/>
</svg>


<!-- toolbar icons -->
<svg class="i" style="left:956px;top:354px;color:#6f6f6f;opacity:.85" width="30" height="26"><use href="#ic-cal"/></svg>
<svg class="i" style="left:991px;top:354px;color:#6f6f6f;opacity:.85" width="30" height="26"><use href="#ic-chk"/></svg>
<svg class="i" style="left:1026px;top:354px;color:#6f6f6f;opacity:.85" width="30" height="26"><use href="#ic-tools"/></svg>
<svg class="i" style="left:1061px;top:354px;color:#6f6f6f;opacity:.85" width="30" height="26"><use href="#ic-undo"/></svg>
<svg class="i" style="left:1410px;top:525px;color:#2a2a2a" width="31" height="27"><use href="#ic-cal"/></svg>
<svg class="i" style="left:1445px;top:525px;color:#2a2a2a" width="31" height="27"><use href="#ic-chk"/></svg>
<svg class="i" style="left:1480px;top:525px;color:#777" width="31" height="27"><use href="#ic-tools"/></svg>
<svg class="i" style="left:1515px;top:525px;color:#2a2a2a" width="31" height="27"><use href="#ic-undo"/></svg>
<svg class="i" style="left:1550px;top:525px;color:#2a2a2a" width="31" height="27"><use href="#ic-chart"/></svg>
<svg class="i" style="left:1585px;top:525px;color:#2a2a2a" width="31" height="27"><use href="#ic-clock"/></svg>
<svg class="i" style="left:1620px;top:525px;color:#777" width="31" height="27"><use href="#ic-tag"/></svg>
<!-- select carets -->
<svg class="i" style="left:984px;top:433.5px" width="9" height="6"><path d="M0.5 0.5 L8.5 0.5 L4.5 5 Z" fill="#777"/></svg>
<svg class="i" style="left:1104px;top:433.5px" width="9" height="6"><path d="M0.5 0.5 L8.5 0.5 L4.5 5 Z" fill="#777"/></svg>

<svg class="i" style="left:863px;top:470px" width="16" height="14"><path d="M2.3 6.2 L6.3 10.5 L13.9 1.3" fill="none" stroke="#8a8a8a" stroke-width="2.3"/></svg>
<svg class="i" style="left:863px;top:556.5px" width="16" height="14"><path d="M2.3 6.2 L6.3 10.5 L13.9 1.3" fill="none" stroke="#8a8a8a" stroke-width="2.3"/></svg>
<svg class="i" style="left:863px;top:645px" width="16" height="14"><path d="M2.3 6.2 L6.3 10.5 L13.9 1.3" fill="none" stroke="#8a8a8a" stroke-width="2.3"/></svg>
<svg class="i" style="left:863px;top:750px" width="16" height="14"><path d="M2.3 6.2 L6.3 10.5 L13.9 1.3" fill="none" stroke="#8a8a8a" stroke-width="2.3"/></svg>
<svg class="i" style="left:861px;top:393px" width="18" height="16"><path d="M2.5 8 L7 12.5 L15.5 2.5" fill="none" stroke="#fff" stroke-width="3.2"/></svg>
<!--HOSTCONTENT-->

</body></html>
